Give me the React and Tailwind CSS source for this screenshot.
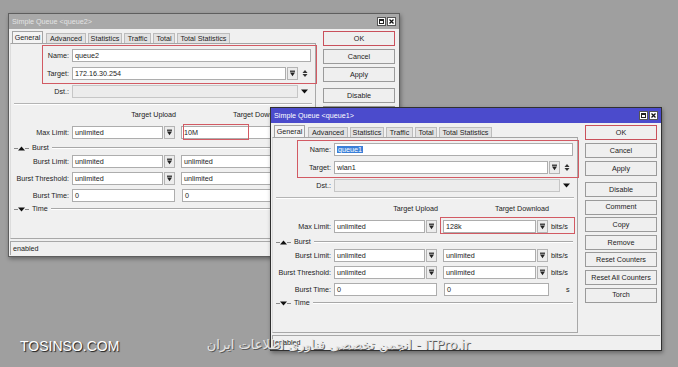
import React from "react";

const DropIcon = () => (
  <svg width="7" height="7" viewBox="0 0 7 7">
    <rect x="1" y="0.6" width="5" height="1.2" fill="#222" />
    <path d="M1 2.6H6L3.5 6.2Z" fill="#222" />
  </svg>
);

const UpDown = () => (
  <svg width="6" height="9" viewBox="0 0 6 9">
    <path d="M0.5 4L3 1L5.5 4Z" fill="#333" />
    <path d="M0.5 5L3 8L5.5 5Z" fill="#333" />
  </svg>
);

const TriDown = () => (
  <svg width="7" height="5" viewBox="0 0 7 5">
    <path d="M0 0.5H7L3.5 4.5Z" fill="#111" />
  </svg>
);

const TriUp = () => (
  <svg width="7" height="5" viewBox="0 0 7 5">
    <path d="M0 4.5H7L3.5 0.5Z" fill="#111" />
  </svg>
);

function Field({ w, children, disabled }) {
  return (
    <div
      className={`h-[13px] ${w} shrink-0 border flex items-center pl-[2px] overflow-hidden whitespace-nowrap ${
        disabled ? "bg-[#ececec] border-[#c6c6c6]" : "bg-white border-[#adadad]"
      }`}
    >
      {children}
    </div>
  );
}

function Drop() {
  return (
    <div className="h-[13px] w-[11px] shrink-0 border border-[#b4b4b4] bg-[#ececec] flex items-center justify-center">
      <DropIcon />
    </div>
  );
}

function Label({ children }) {
  return <div className="w-[61px] shrink-0 text-right pr-[3px] whitespace-nowrap">{children}</div>;
}

function GroupHead({ up, label }) {
  return (
    <div className="h-[10px] flex items-center pl-[3px] pr-[4px]">
      <div className="w-[4px] h-px bg-[#8a8a8a]" />
      {up ? <TriUp /> : <TriDown />}
      <div className="w-[4px] h-px bg-[#8a8a8a]" />
      <div className="ml-[3px] mr-[3px]">{label}</div>
      <div className="flex-1 h-[2px] border-t border-[#a8a8a8] border-b-white border-b" />
    </div>
  );
}

function Btn({ children, ok }) {
  return (
    <div
      className={`h-[15px] w-[72px] flex items-center justify-center bg-[#efefef] border ${
        ok ? "border-[#c9505b]" : "border-[#9a9a9a]"
      }`}
    >
      {children}
    </div>
  );
}

function Tab({ w, sel, children, ml }) {
  return (
    <div
      className={`${w} ${ml} flex items-center justify-center border-t border-l border-r whitespace-nowrap ${
        sel ? "h-[12px] bg-[#f4f4f4] border-[#a4a4a4]" : "h-[10px] bg-[#e2e2e2] border-[#bcbcbc]"
      }`}
    >
      {children}
    </div>
  );
}

function Win({ pos, active, title, name, target, down, selected, red1, red2 }) {
  return (
    <div
      className={`absolute ${pos} w-[392px] h-[244px] border bg-[#f0f0f0] text-[#222] shadow-[1px_2px_4px_rgba(0,0,0,0.35)] ${
        active ? "border-[#303030]" : "border-[#5e5e5e]"
      }`}
    >
      <div
        className={`h-[15px] flex items-center justify-between pl-[3px] pr-[3px] ${
          active ? "bg-[#4b4bcc] text-white" : "bg-[#a9a9a9] text-[#e4e4e4]"
        }`}
      >
        <div className="whitespace-nowrap">{title}</div>
        <div className="flex gap-[1px]">
          <div className="w-[9px] h-[9px] bg-white border border-[#555] flex items-center justify-center">
            <div className="w-[5px] h-[5px] border border-[#222] border-t-2" />
          </div>
          <div className="w-[9px] h-[9px] bg-white border border-[#555] flex items-center justify-center">
            <svg width="5" height="5" viewBox="0 0 5 5">
              <path d="M0.5 0.5L4.5 4.5M4.5 0.5L0.5 4.5" stroke="#111" strokeWidth="1.3" />
            </svg>
          </div>
        </div>
      </div>

      <div className="flex">
        <div className="ml-[1px] w-[306px]">
          <div className="mt-[2px] h-[12px] flex items-end">
            <Tab w="w-[31px]" ml="ml-[2px]" sel>General</Tab>
            <Tab w="w-[40px]" ml="ml-[3px]">Advanced</Tab>
            <Tab w="w-[34px]" ml="ml-[2px]">Statistics</Tab>
            <Tab w="w-[27px]" ml="ml-[2px]">Traffic</Tab>
            <Tab w="w-[22px]" ml="ml-[2px]">Total</Tab>
            <Tab w="w-[53px]" ml="ml-[2px]">Total Statistics</Tab>
          </div>
          <div className="h-[196px] border border-t-[#a4a4a4] border-l-[#dcdcdc] border-r-[#a8a8a8] border-b-[#a8a8a8] flex flex-col">
            <div className="mt-[5px] flex items-center">
              <Label>Name:</Label>
              <Field w="w-[239px]">
                {selected ? <span className="bg-[#3a7fd8] text-white px-px">{name}</span> : name}
              </Field>
            </div>
            <div className="mt-[5px] flex items-center">
              <Label>Target:</Label>
              <Field w="w-[214px]">{target}</Field>
              <div className="ml-[1px]">
                <Drop />
              </div>
              <div className="ml-[4px]">
                <UpDown />
              </div>
            </div>
            <div className="mt-[5px] flex items-center">
              <Label>Dst.:</Label>
              <Field w="w-[226px]" disabled />
              <div className="ml-[3px]">
                <TriDown />
              </div>
            </div>
            <div className="mt-[5px] mx-[3px] h-[2px] border-t border-[#b4b4b4] border-b border-b-white" />
            <div className="mt-[5px] h-[10px] flex items-center">
              <div className="w-[61px]" />
              <div className="w-[104px] text-right whitespace-nowrap">Target Upload</div>
              <div className="ml-[6px] w-[105px] text-right whitespace-nowrap">Target Download</div>
            </div>
            <div className="mt-[6px] flex items-center">
              <Label>Max Limit:</Label>
              <Field w="w-[91px]">unlimited</Field>
              <div className="ml-[1px]">
                <Drop />
              </div>
              <div className="ml-[6px]">
                <Field w="w-[93px]">{down}</Field>
              </div>
              <div className="ml-[1px]">
                <Drop />
              </div>
              <div className="ml-[3px]">bits/s</div>
            </div>
            <div className="mt-[4px]">
              <GroupHead up label="Burst" />
            </div>
            <div className="mt-[2px] flex items-center">
              <Label>Burst Limit:</Label>
              <Field w="w-[91px]">unlimited</Field>
              <div className="ml-[1px]">
                <Drop />
              </div>
              <div className="ml-[6px]">
                <Field w="w-[93px]">unlimited</Field>
              </div>
              <div className="ml-[1px]">
                <Drop />
              </div>
              <div className="ml-[3px]">bits/s</div>
            </div>
            <div className="mt-[4px] flex items-center">
              <Label>Burst Threshold:</Label>
              <Field w="w-[91px]">unlimited</Field>
              <div className="ml-[1px]">
                <Drop />
              </div>
              <div className="ml-[6px]">
                <Field w="w-[93px]">unlimited</Field>
              </div>
              <div className="ml-[1px]">
                <Drop />
              </div>
              <div className="ml-[3px]">bits/s</div>
            </div>
            <div className="mt-[4px] flex items-center">
              <Label>Burst Time:</Label>
              <Field w="w-[103px]">0</Field>
              <div className="ml-[7px]">
                <Field w="w-[105px]">0</Field>
              </div>
              <div className="ml-[17px]">s</div>
            </div>
            <div className="mt-[2px]">
              <GroupHead label="Time" />
            </div>
          </div>
        </div>

        <div className="ml-[7px] mt-[2px] flex flex-col">
          <div className="flex flex-col gap-[3px]">
            <Btn ok>OK</Btn>
            <Btn>Cancel</Btn>
            <Btn>Apply</Btn>
          </div>
          <div className="mt-[6px] flex flex-col gap-[2.6px]">
            <Btn>Disable</Btn>
            <Btn>Comment</Btn>
            <Btn>Copy</Btn>
            <Btn>Remove</Btn>
            <Btn>Reset Counters</Btn>
            <Btn>Reset All Counters</Btn>
            <Btn>Torch</Btn>
          </div>
        </div>
      </div>

      <div className="mt-[2px] mx-[1px] h-[14px] border-t border-[#a8a8a8] flex">
        <div className="border-l border-[#a8a8a8] pl-[2px] pt-[3px] w-[120px]">enabled</div>
      </div>

      <div className={`absolute ${red1} border border-[#d25a63] pointer-events-none`} />
      <div className={`absolute ${red2} border border-[#d25a63] pointer-events-none`} />
    </div>
  );
}

export default function App() {
  return (
    <div className="relative w-[678px] h-[367px] overflow-hidden bg-[#9f9f9f] font-['Liberation_Sans',Arial,sans-serif] text-[7.2px] leading-none">
      <Win
        pos="left-[8px] top-[13px]"
        title="Simple Queue <queue2>"
        name="queue2"
        target="172.16.30.254"
        down="10M"
        red1="left-[33px] top-[31px] w-[275px] h-[39px]"
        red2="left-[174px] top-[110px] w-[66px] h-[16px]"
      />
      <Win
        pos="left-[270px] top-[107px]"
        active
        selected
        title="Simple Queue <queue1>"
        name="queue1"
        target="wlan1"
        down="128k"
        red1="left-[26px] top-[32px] w-[282px] h-[38px]"
        red2="left-[169px] top-[109px] w-[135px] h-[17px]"
      />
      <div className="absolute left-[20px] top-[339px] text-[14px] leading-none text-white [text-shadow:1px_1px_1px_#1a1a1a] whitespace-nowrap">
        TOSINSO.COM
      </div>
      <div
        dir="rtl"
        className="absolute left-[196px] top-[338px] w-[274px] text-[13px] leading-none text-[#e4e4e4] font-['DejaVu_Sans',sans-serif] [text-shadow:1px_1px_0_#5a5a5a] whitespace-nowrap"
      >
        ITPro.ir - انجمن تخصصی فناوری اطلاعات ایران
      </div>
    </div>
  );
}
